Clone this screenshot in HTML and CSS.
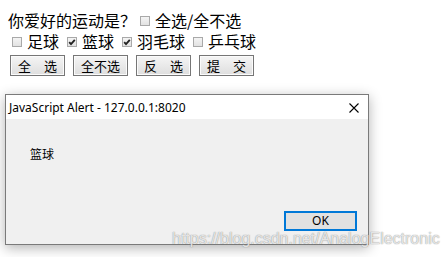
FILE: index.html
```html
<!DOCTYPE html>
<html lang="zh">
<head>
<meta charset="utf-8">
<title>Alert</title>
<link rel="stylesheet" href="styles.css">
</head>
<body>
<div class="page">
  <div class="row row-q">
    <span class="q">你爱好的运动是？</span>
    <label class="opt"><span class="box"></span><span>全选/全不选</span></label>
  </div>
  <div class="row row-items">
    <label class="opt"><span class="box"></span><span>足球</span></label>
    <label class="opt"><span class="box checked"><svg viewBox="0 0 10 10" width="10" height="10"><path d="M2.2 5.2 L4 7.2 L7.8 2.8" fill="none" stroke="#222" stroke-width="1.8"/></svg></span><span>篮球</span></label>
    <label class="opt"><span class="box checked"><svg viewBox="0 0 10 10" width="10" height="10"><path d="M2.2 5.2 L4 7.2 L7.8 2.8" fill="none" stroke="#222" stroke-width="1.8"/></svg></span><span>羽毛球</span></label>
    <label class="opt"><span class="box"></span><span>乒乓球</span></label>
  </div>
  <div class="row row-btns">
    <button class="btn">全　选</button>
    <button class="btn">全不选</button>
    <button class="btn">反　选</button>
    <button class="btn">提　交</button>
  </div>
</div>

<div class="dialog">
  <div class="titlebar">
    <span class="title">JavaScript Alert - 127.0.0.1:8020</span>
    <svg class="close" viewBox="0 0 10 10" width="10" height="10"><path d="M0.5 0.5 L9.5 9.5 M9.5 0.5 L0.5 9.5" stroke="#000" stroke-width="1.1"/></svg>
  </div>
  <div class="dbody">
    <div class="msg">篮球</div>
    <div class="footer"><button class="ok">OK</button></div>
  </div>
</div>

<div class="watermark">https://blog.csdn.net/AnalogElectronic</div>
</body>
</html>
```

FILE: styles.css
```css
html, body {
  margin: 0;
  padding: 0;
  background: #fff;
}
body {
  width: 448px;
  height: 257px;
  overflow: hidden;
  position: relative;
  font-family: "Noto Sans CJK SC", "Noto Sans", sans-serif;
  color: #000;
}
.page {
  padding: 10px 8px 0 8px;
}
.row {
  display: flex;
  align-items: center;
  font-size: 16px;
  height: 21px;
  line-height: 21px;
}
.row-q .q {
  margin-right: 4px;
}
.opt {
  display: flex;
  align-items: center;
}
.row-items {
  padding-left: 4px;
  gap: 8px;
}
.box {
  display: inline-block;
  width: 8px;
  height: 8px;
  border: 1px solid #a9a9a9;
  background: linear-gradient(#f4f4f4, #e2e2e2);
  margin-right: 5px;
  position: relative;
  flex: none;
}
.box svg {
  position: absolute;
  left: -1px;
  top: -1px;
}
.row-btns {
  margin-top: 3px;
  height: 21px;
  padding-left: 2px;
  gap: 8px;
}
.btn {
  width: 55px;
  height: 21px;
  padding: 0;
  font-family: "Noto Sans CJK SC", sans-serif;
  font-size: 13px;
  line-height: 19px;
  color: #000;
  border: 1px solid #767676;
  background: linear-gradient(#f5f5f5, #dedede);
  box-shadow: inset 0 0 0 1px #fbfbfb;
  border-radius: 0;
}
.dialog {
  position: absolute;
  left: 5px;
  top: 94px;
  width: 362px;
  height: 149px;
  border: 1px solid #7a7a7a;
  background: #f0f0f0;
  box-shadow: 0 3px 12px rgba(0,0,0,0.3);
  display: flex;
  flex-direction: column;
}
.titlebar {
  height: 24px;
  background: #fff;
  display: flex;
  align-items: center;
  justify-content: space-between;
  padding: 0 9px 0 3px;
  flex: none;
}
.title {
  font-family: "Noto Sans", "Open Sans", sans-serif;
  font-size: 12px;
  color: #000;
  line-height: 24px;
  padding-top: 1px;
}
.close {
  display: block;
  margin-top: 2px;
}
.dbody {
  flex: 1;
  display: flex;
  flex-direction: column;
}
.msg {
  padding: 27px 0 0 24px;
  font-size: 12px;
  line-height: 16px;
}
.footer {
  margin-top: auto;
  display: flex;
  justify-content: flex-end;
  padding: 0 11px 13px 0;
}
.ok {
  width: 73px;
  height: 20px;
  padding: 0;
  border: 2px solid #0078d7;
  background: #e1e1e1;
  font-family: "Noto Sans", sans-serif;
  font-size: 12px;
  line-height: 16px;
  color: #000;
}
.watermark {
  position: absolute;
  left: 172px;
  top: 229px;
  font-family: "Liberation Sans", Arial, sans-serif;
  font-size: 16px;
  line-height: 19px;
  color: rgba(255,255,255,0.75);
  text-shadow: 0 0 1px rgba(120,120,120,0.6), 0 0 1px rgba(120,120,120,0.6);
  white-space: nowrap;
}
```
